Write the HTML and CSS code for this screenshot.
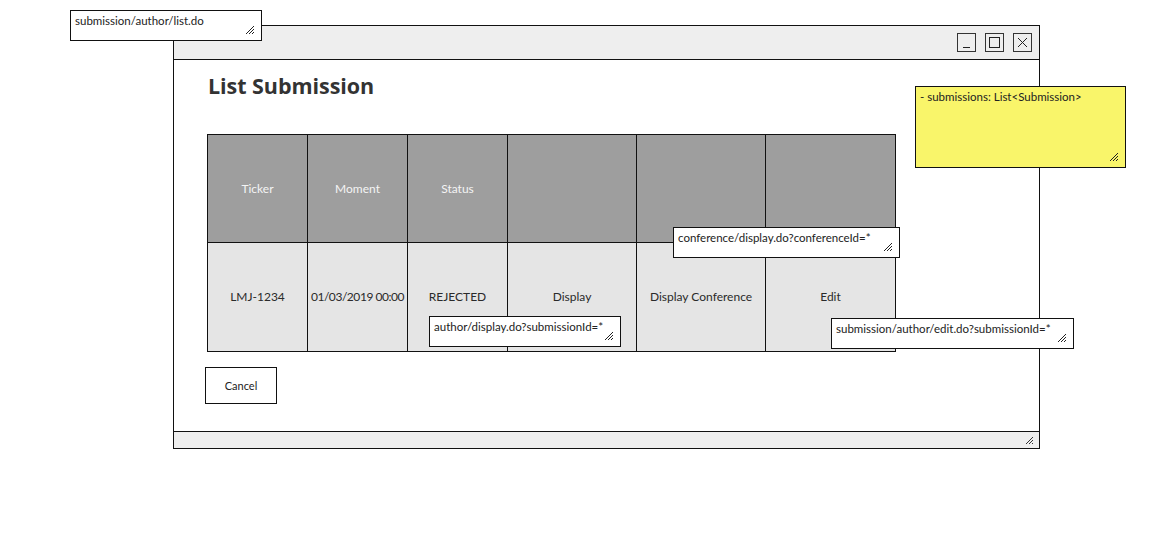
FILE: index.html
```html
<!DOCTYPE html>
<html>
<head>
<meta charset="utf-8">
<link rel="stylesheet" href="styles.css">
</head>
<body>
<div class="canvas">
  <div class="window">
    <div class="titlebar">
      <span class="ctl"><svg width="19" height="19" viewBox="0 0 19 19"><line x1="6" y1="14.5" x2="13" y2="14.5" stroke="#222" stroke-width="1"/></svg></span>
      <span class="ctl"><svg width="19" height="19" viewBox="0 0 19 19"><rect x="4.5" y="4.5" width="10" height="10" fill="none" stroke="#222" stroke-width="1"/></svg></span>
      <span class="ctl"><svg width="19" height="19" viewBox="0 0 19 19"><path d="M5 5 L14 14 M14 5 L5 14" stroke="#222" stroke-width="1"/></svg></span>
    </div>
    <div class="content">
      <h1 class="title">List Submission</h1>
      <table class="grid">
        <tr class="head">
          <td class="c1">Ticker</td><td class="c2">Moment</td><td class="c3">Status</td><td class="c4"></td><td class="c5"></td><td class="c6"></td>
        </tr>
        <tr class="body">
          <td>LMJ-1234</td><td class="tight">01/03/2019 00:00</td><td>REJECTED</td><td>Display</td><td>Display Conference</td><td>Edit</td>
        </tr>
      </table>
      <div class="actions"><button class="btn">Cancel</button></div>
    </div>
    <div class="statusbar"><svg class="grip" width="9" height="9" viewBox="0 0 9 9"><path d="M8 1 L1 8 M8 4 L4 8" stroke="#333" stroke-width="1"/><path d="M8 7 L7 8" stroke="#333" stroke-width="1"/></svg></div>
  </div>

  <div class="note n1">submission/author/list.do<svg class="rz" width="10" height="10" viewBox="0 0 10 10"><path d="M9 1 L1 9 M9 4 L4 9 M9 7 L7 9" stroke="#222" stroke-width="1"/></svg></div>
  <div class="note yellow n2">- submissions: List&lt;Submission&gt;<svg class="rz" width="10" height="10" viewBox="0 0 10 10"><path d="M9 1 L1 9 M9 4 L4 9 M9 7 L7 9" stroke="#222" stroke-width="1"/></svg></div>
  <div class="note n3">conference/display.do?conferenceId=*<svg class="rz" width="10" height="10" viewBox="0 0 10 10"><path d="M9 1 L1 9 M9 4 L4 9 M9 7 L7 9" stroke="#222" stroke-width="1"/></svg></div>
  <div class="note n4">author/display.do?submissionId=*<svg class="rz" width="10" height="10" viewBox="0 0 10 10"><path d="M9 1 L1 9 M9 4 L4 9 M9 7 L7 9" stroke="#222" stroke-width="1"/></svg></div>
  <div class="note n5">submission/author/edit.do?submissionId=*<svg class="rz" width="10" height="10" viewBox="0 0 10 10"><path d="M9 1 L1 9 M9 4 L4 9 M9 7 L7 9" stroke="#222" stroke-width="1"/></svg></div>
</div>
</body>
</html>
```

FILE: styles.css
```css
* { box-sizing: border-box; }
html, body { margin: 0; padding: 0; background: #fff; }
body { font-family: "Lato", "Open Sans", sans-serif; color: #222; }
.canvas { position: relative; width: 1176px; height: 558px; overflow: hidden; padding: 25px 0 0 173px; }

.window { width: 867px; height: 424px; border: 1px solid #111; display: flex; flex-direction: column; background: #fff; }
.titlebar { height: 34px; flex: none; background: #eee; border-bottom: 1px solid #111; display: flex; justify-content: flex-end; align-items: flex-start; gap: 9px; padding: 7px 7px 0 0; }
.ctl { width: 19px; height: 19px; border: 1px solid #333; display: block; }
.ctl svg { display: block; margin: -1px; }

.content { flex: 1; padding: 0 0 0 33px; }
.title { margin: 0; padding: 11px 0 0 1px; height: 74px; font-family: "Open Sans", sans-serif; font-size: 21.5px; font-weight: 700; color: #333; letter-spacing: -0.05px; }

.grid { border-collapse: collapse; font-size: 12px; table-layout: fixed; }
.grid td { border: 1px solid #111; text-align: center; padding: 0; white-space: nowrap; }
.head td { background: #9e9e9e; color: #f4f4f4; height: 108px; }
.body td { background: #e5e5e5; color: #2a2a2a; height: 109px; padding-bottom: 1px; }
.body td.tight { letter-spacing: -0.45px; }
.c1, .c2, .c3 { width: 100px; }
.c4, .c5 { width: 129px; }
.c6 { width: 130px; }

.actions { padding: 15px 0 0 0; margin-left: -2px; }
.btn { width: 72px; height: 37px; background: #fff; border: 1px solid #111; font-family: inherit; font-size: 11px; color: #222; padding: 0; }

.statusbar { height: 17px; flex: none; background: #eee; border-top: 1px solid #111; position: relative; }
.grip { position: absolute; right: 5px; bottom: 3px; }

.note { position: absolute; background: #fff; border: 1px solid #111; font-size: 11.5px; line-height: 13px; padding: 3px 4px; color: #222; white-space: nowrap; }
.note .rz { position: absolute; right: 6px; bottom: 5px; }
.yellow { background: #f9f56a; }
.n1 { left: 70px; top: 10px; width: 192px; height: 31px; }
.n2 { left: 915px; top: 86px; width: 211px; height: 82px; }
.n3 { left: 673px; top: 227px; width: 227px; height: 31px; }
.n4 { left: 429px; top: 316px; width: 192px; height: 31px; }
.n5 { left: 831px; top: 318px; width: 243px; height: 31px; }
```
